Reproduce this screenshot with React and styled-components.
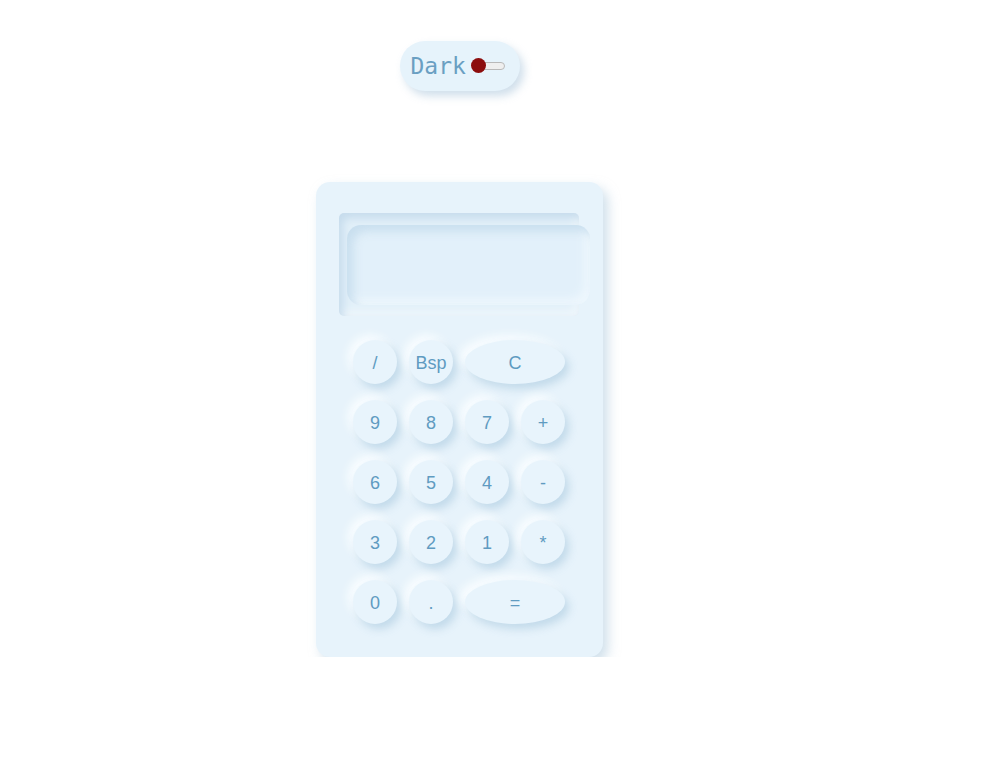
import React from 'react'
import styled, { createGlobalStyle } from 'styled-components'

const GlobalStyle = createGlobalStyle`
  body {
    margin: 0;
    background: #ffffff;
    font-family: "Liberation Sans", Arial, sans-serif;
  }
`

const Page = styled.div`
  width: 919px;
  display: flex;
  flex-direction: column;
  align-items: center;
  padding-top: 41px;
`

const ThemeSwitch = styled.div`
  width: 120px;
  height: 50px;
  box-sizing: border-box;
  border-radius: 25px;
  background: #e6f3fb;
  box-shadow: 4px 5px 9px rgba(150, 185, 210, 0.45), -3px -3px 8px #ffffff;
  display: flex;
  align-items: center;
  padding-left: 11px;
  margin-bottom: 91px;
`

const SwitchLabel = styled.span`
  font-family: "DejaVu Sans Mono", monospace;
  font-size: 23px;
  color: #6a9fc2;
  line-height: 1;
`

const Track = styled.span`
  position: relative;
  display: inline-block;
  width: 33px;
  height: 8px;
  margin-left: 6px;
  box-sizing: border-box;
  border: 1px solid #b9b9b9;
  border-radius: 4px;
  background: #efefef;
`

const Thumb = styled.span`
  position: absolute;
  left: -2px;
  top: -5px;
  width: 15px;
  height: 15px;
  border-radius: 50%;
  background: #8c0d0d;
`

const Card = styled.div`
  width: 287px;
  box-sizing: border-box;
  padding: 31px 24px 33px 23px;
  border-radius: 14px;
  background: #e7f3fb;
  box-shadow: 5px 6px 12px rgba(170, 198, 218, 0.55);
`

const Screen = styled.div`
  width: 240px;
  height: 103px;
  box-sizing: border-box;
  padding: 12px 0 0 8px;
  border-radius: 5px;
  background: #e2f0f9;
  box-shadow: inset 4px 5px 8px rgba(190, 214, 232, 0.8), inset -4px -5px 8px #f0f7fc;
  margin-bottom: 24px;
`

const ScreenGlass = styled.div`
  width: 243px;
  height: 80px;
  box-sizing: border-box;
  border-radius: 14px;
  background: #e2f0fa;
  box-shadow: inset 6px 6px 10px rgba(196, 220, 236, 0.85), inset -6px -6px 10px #eef7fd;
`

const Keypad = styled.div`
  display: grid;
  grid-template-columns: repeat(4, 44px);
  column-gap: 12px;
  row-gap: 16px;
  margin-left: 14px;
`

const Key = styled.button`
  grid-column: span ${p => p.$span || 1};
  height: 44px;
  border: none;
  border-radius: 50%;
  padding: 0;
  background: #e8f4fc;
  color: #5f9bc1;
  font-family: "Liberation Sans", Arial, sans-serif;
  font-size: 18px;
  line-height: 46px;
  box-shadow: 4px 5px 8px rgba(182, 210, 228, 0.75), -5px -5px 9px #f9fdff;
  cursor: pointer;
`

const keys = [
  ['/'], ['Bsp'], ['C', 2],
  ['9'], ['8'], ['7'], ['+'],
  ['6'], ['5'], ['4'], ['-'],
  ['3'], ['2'], ['1'], ['*'],
  ['0'], ['.'], ['=', 2],
]

export default function App() {
  return (
    <>
      <GlobalStyle />
      <Page>
        <ThemeSwitch>
          <SwitchLabel>Dark</SwitchLabel>
          <Track>
            <Thumb />
          </Track>
        </ThemeSwitch>
        <Card>
          <Screen>
            <ScreenGlass />
          </Screen>
          <Keypad>
            {keys.map(([label, span]) => (
              <Key key={label} $span={span}>{label}</Key>
            ))}
          </Keypad>
        </Card>
      </Page>
    </>
  )
}
